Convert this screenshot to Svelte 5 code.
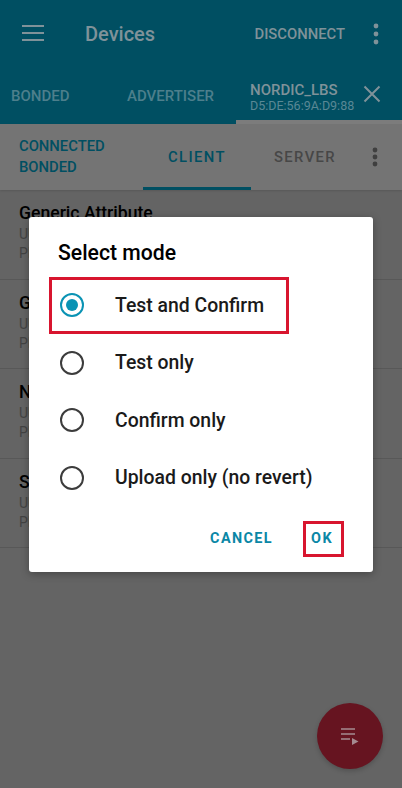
<script>
  const services = [
    { name: "Generic Attribute" },
    { name: "Generic Access" },
    { name: "Nordic LED Button" },
    { name: "SMP Service" }
  ];
  const modes = ["Test and Confirm", "Test only", "Confirm only", "Upload only (no revert)"];
  let selected = $state(0);
</script>

<div class="screen">
  <header class="appbar">
    <div class="toolbar">
      <svg class="menu" width="24" height="24" viewBox="0 0 24 24"><path d="M0 4h22M0 11h22M0 18h22" stroke="currentColor" stroke-width="1.8" fill="none"/></svg>
      <span class="title">Devices</span>
      <span class="action">DISCONNECT</span>
      <svg class="dots" width="6" height="22" viewBox="0 0 6 22"><circle cx="3" cy="3" r="2.4"/><circle cx="3" cy="11" r="2.4"/><circle cx="3" cy="19" r="2.4"/></svg>
    </div>
    <div class="tabs">
      <span class="tab bonded">BONDED</span>
      <span class="tab advertiser">ADVERTISER</span>
      <div class="tab device">
        <div class="device-text">
          <span class="device-name">NORDIC_LBS</span>
          <span class="device-addr">D5:DE:56:9A:D9:88</span>
        </div>
        <svg width="18" height="18" viewBox="0 0 18 18"><path d="M1.5 1.5l15 15M16.5 1.5l-15 15" stroke="currentColor" stroke-width="2" fill="none"/></svg>
      </div>
    </div>
  </header>

  <div class="subbar">
    <div class="state">CONNECTED<br />BONDED</div>
    <span class="subtab active">CLIENT</span>
    <span class="subtab">SERVER</span>
    <svg class="subdots" width="6" height="20" viewBox="0 0 6 20"><circle cx="3" cy="3" r="2.4"/><circle cx="3" cy="10" r="2.4"/><circle cx="3" cy="17" r="2.4"/></svg>
  </div>

  <div class="list">
    {#each services as s}
      <div class="service">
        <div class="name">{s.name}</div>
        <div class="meta first">UUID: 0x1801</div>
        <div class="meta">PRIMARY SERVICE</div>
      </div>
    {/each}
  </div>

  <div class="fab">
    <svg width="18" height="17" viewBox="0 0 18 17"><path d="M0 1h14M0 6h14M0 11h9" stroke="currentColor" stroke-width="1.7" fill="none"/><path d="M11 10l6.5 3.5L11 17z" fill="currentColor"/></svg>
  </div>

  <div class="overlay">
    <div class="dialog">
      <h2>Select mode</h2>
      <div class="options">
        {#each modes as mode, i}
          <button class="option" class:marked={i === 0} onclick={() => (selected = i)}>
            <span class="radio" class:on={selected === i}></span>
            <span class="label">{mode}</span>
          </button>
        {/each}
      </div>
      <div class="buttons">
        <span class="btn cancel">CANCEL</span>
        <span class="btn ok">OK</span>
      </div>
    </div>
  </div>
</div>

<style>
  :global(body) {
    margin: 0;
    font-family: Roboto, sans-serif;
  }

  /* colours below are the dimmed ones, as seen under the dialog's scrim */
  .screen {
    position: relative;
    width: 402px;
    height: 788px;
    overflow: hidden;
    background: #646464;
  }

  .appbar {
    height: 124px;
    background: #004f62;
    color: #7f9299;
    display: flex;
    flex-direction: column;
  }

  .toolbar {
    height: 68px;
    display: flex;
    align-items: center;
    padding: 0 23px 0 22px;
  }

  .title {
    margin-left: 39px;
    font-size: 20px;
    font-weight: 500;
    flex: 1;
  }

  .action {
    font-size: 14.8px;
    font-weight: 500;
    margin-right: 28px;
  }

  .dots {
    fill: currentColor;
  }

  .tabs {
    flex: 1;
    display: flex;
    align-items: center;
    font-weight: 500;
    font-size: 15px;
    color: #4d7f8c;
  }

  .tab.bonded {
    margin-left: 11px;
    width: 116px;
  }

  .tab.advertiser {
    width: 109px;
  }

  .tab.device {
    align-self: stretch;
    flex: 1;
    display: flex;
    align-items: center;
    gap: 9px;
    padding: 0 18px 0 14px;
    border-bottom: 4px solid #7c7c7c;
    box-sizing: border-box;
    color: #7f9299;
  }

  .device-text {
    display: flex;
    flex-direction: column;
    line-height: 15px;
    margin-top: 8px;
  }

  .device-name {
    font-size: 15px;
  }

  .device-addr {
    font-size: 12.5px;
    font-weight: 400;
    color: #5a8895;
  }

  .subbar {
    height: 66px;
    display: flex;
    align-items: center;
    background: #747474;
    font-weight: 500;
    color: #474747;
    box-shadow: 0 1px 2px rgba(0, 0, 0, 0.12);
  }

  .state {
    width: 143px;
    padding-left: 19px;
    box-sizing: border-box;
    color: #004f62;
    font-size: 14.8px;
    line-height: 21px;
  }

  .subtab {
    width: 108px;
    height: 100%;
    display: flex;
    align-items: center;
    justify-content: center;
    font-size: 14.8px;
    letter-spacing: 1.4px;
  }

  .subtab.active {
    color: #004f62;
    box-shadow: inset 0 -3px #004f62;
  }

  .subdots {
    margin-left: 13px;
    fill: #3f3f3f;
  }

  .service {
    height: 89.5px;
    padding: 13px 19px 0;
    box-sizing: border-box;
    border-bottom: 1px solid #585858;
  }

  .name {
    font-size: 17.6px;
    font-weight: 500;
    color: #000;
    line-height: 20px;
  }

  .meta {
    font-size: 14px;
    color: #434343;
    line-height: 19px;
  }

  .meta.first {
    margin-top: 2px;
  }

  .fab {
    position: absolute;
    right: 19px;
    bottom: 19px;
    width: 66px;
    height: 66px;
    border-radius: 50%;
    background: #661420;
    color: #a58a90;
    display: flex;
    align-items: center;
    justify-content: center;
    box-shadow: 0 2px 5px rgba(0, 0, 0, 0.2);
  }

  .overlay {
    position: absolute;
    inset: 0;
    display: flex;
    align-items: center;
    justify-content: center;
  }

  .dialog {
    width: 344px;
    height: 355px;
    box-sizing: border-box;
    background: #fff;
    border-radius: 3px;
    padding: 0 29px 0 20px;
    box-shadow: 0 2px 8px rgba(0, 0, 0, 0.3);
  }

  h2 {
    margin: 23px 0 0 9px;
    font-size: 21.2px;
    font-weight: 500;
    line-height: 26px;
    color: #000;
  }

  .options {
    margin-top: 11px;
    display: flex;
    flex-direction: column;
  }

  .option {
    height: 57.5px;
    width: 240px;
    padding: 0 0 0 8px;
    display: flex;
    align-items: center;
    background: none;
    border: 3px solid transparent;
    box-sizing: border-box;
    font: inherit;
    white-space: nowrap;
    cursor: pointer;
  }

  .option.marked {
    border-color: #d8152f;
  }

  .radio {
    width: 24px;
    height: 24px;
    box-sizing: border-box;
    border: 2.5px solid #3c3c3c;
    border-radius: 50%;
    margin-right: 31px;
    flex: none;
    display: flex;
    align-items: center;
    justify-content: center;
  }

  .radio.on {
    border-color: #0a93b4;
  }

  .radio.on::after {
    content: "";
    width: 12px;
    height: 12px;
    border-radius: 50%;
    background: #0a93b4;
  }

  .label {
    font-size: 19.4px;
    font-weight: 500;
    color: #1a1a1a;
  }

  .buttons {
    margin-top: 14px;
    display: flex;
    justify-content: flex-end;
    align-items: center;
    gap: 30px;
  }

  .btn {
    font-size: 14.4px;
    font-weight: 700;
    letter-spacing: 1.4px;
    color: #0a87a6;
  }

  .ok {
    width: 41px;
    height: 36px;
    box-sizing: border-box;
    border: 3px solid #d8152f;
    display: flex;
    align-items: center;
    justify-content: center;
    padding-right: 3px;
  }
</style>
